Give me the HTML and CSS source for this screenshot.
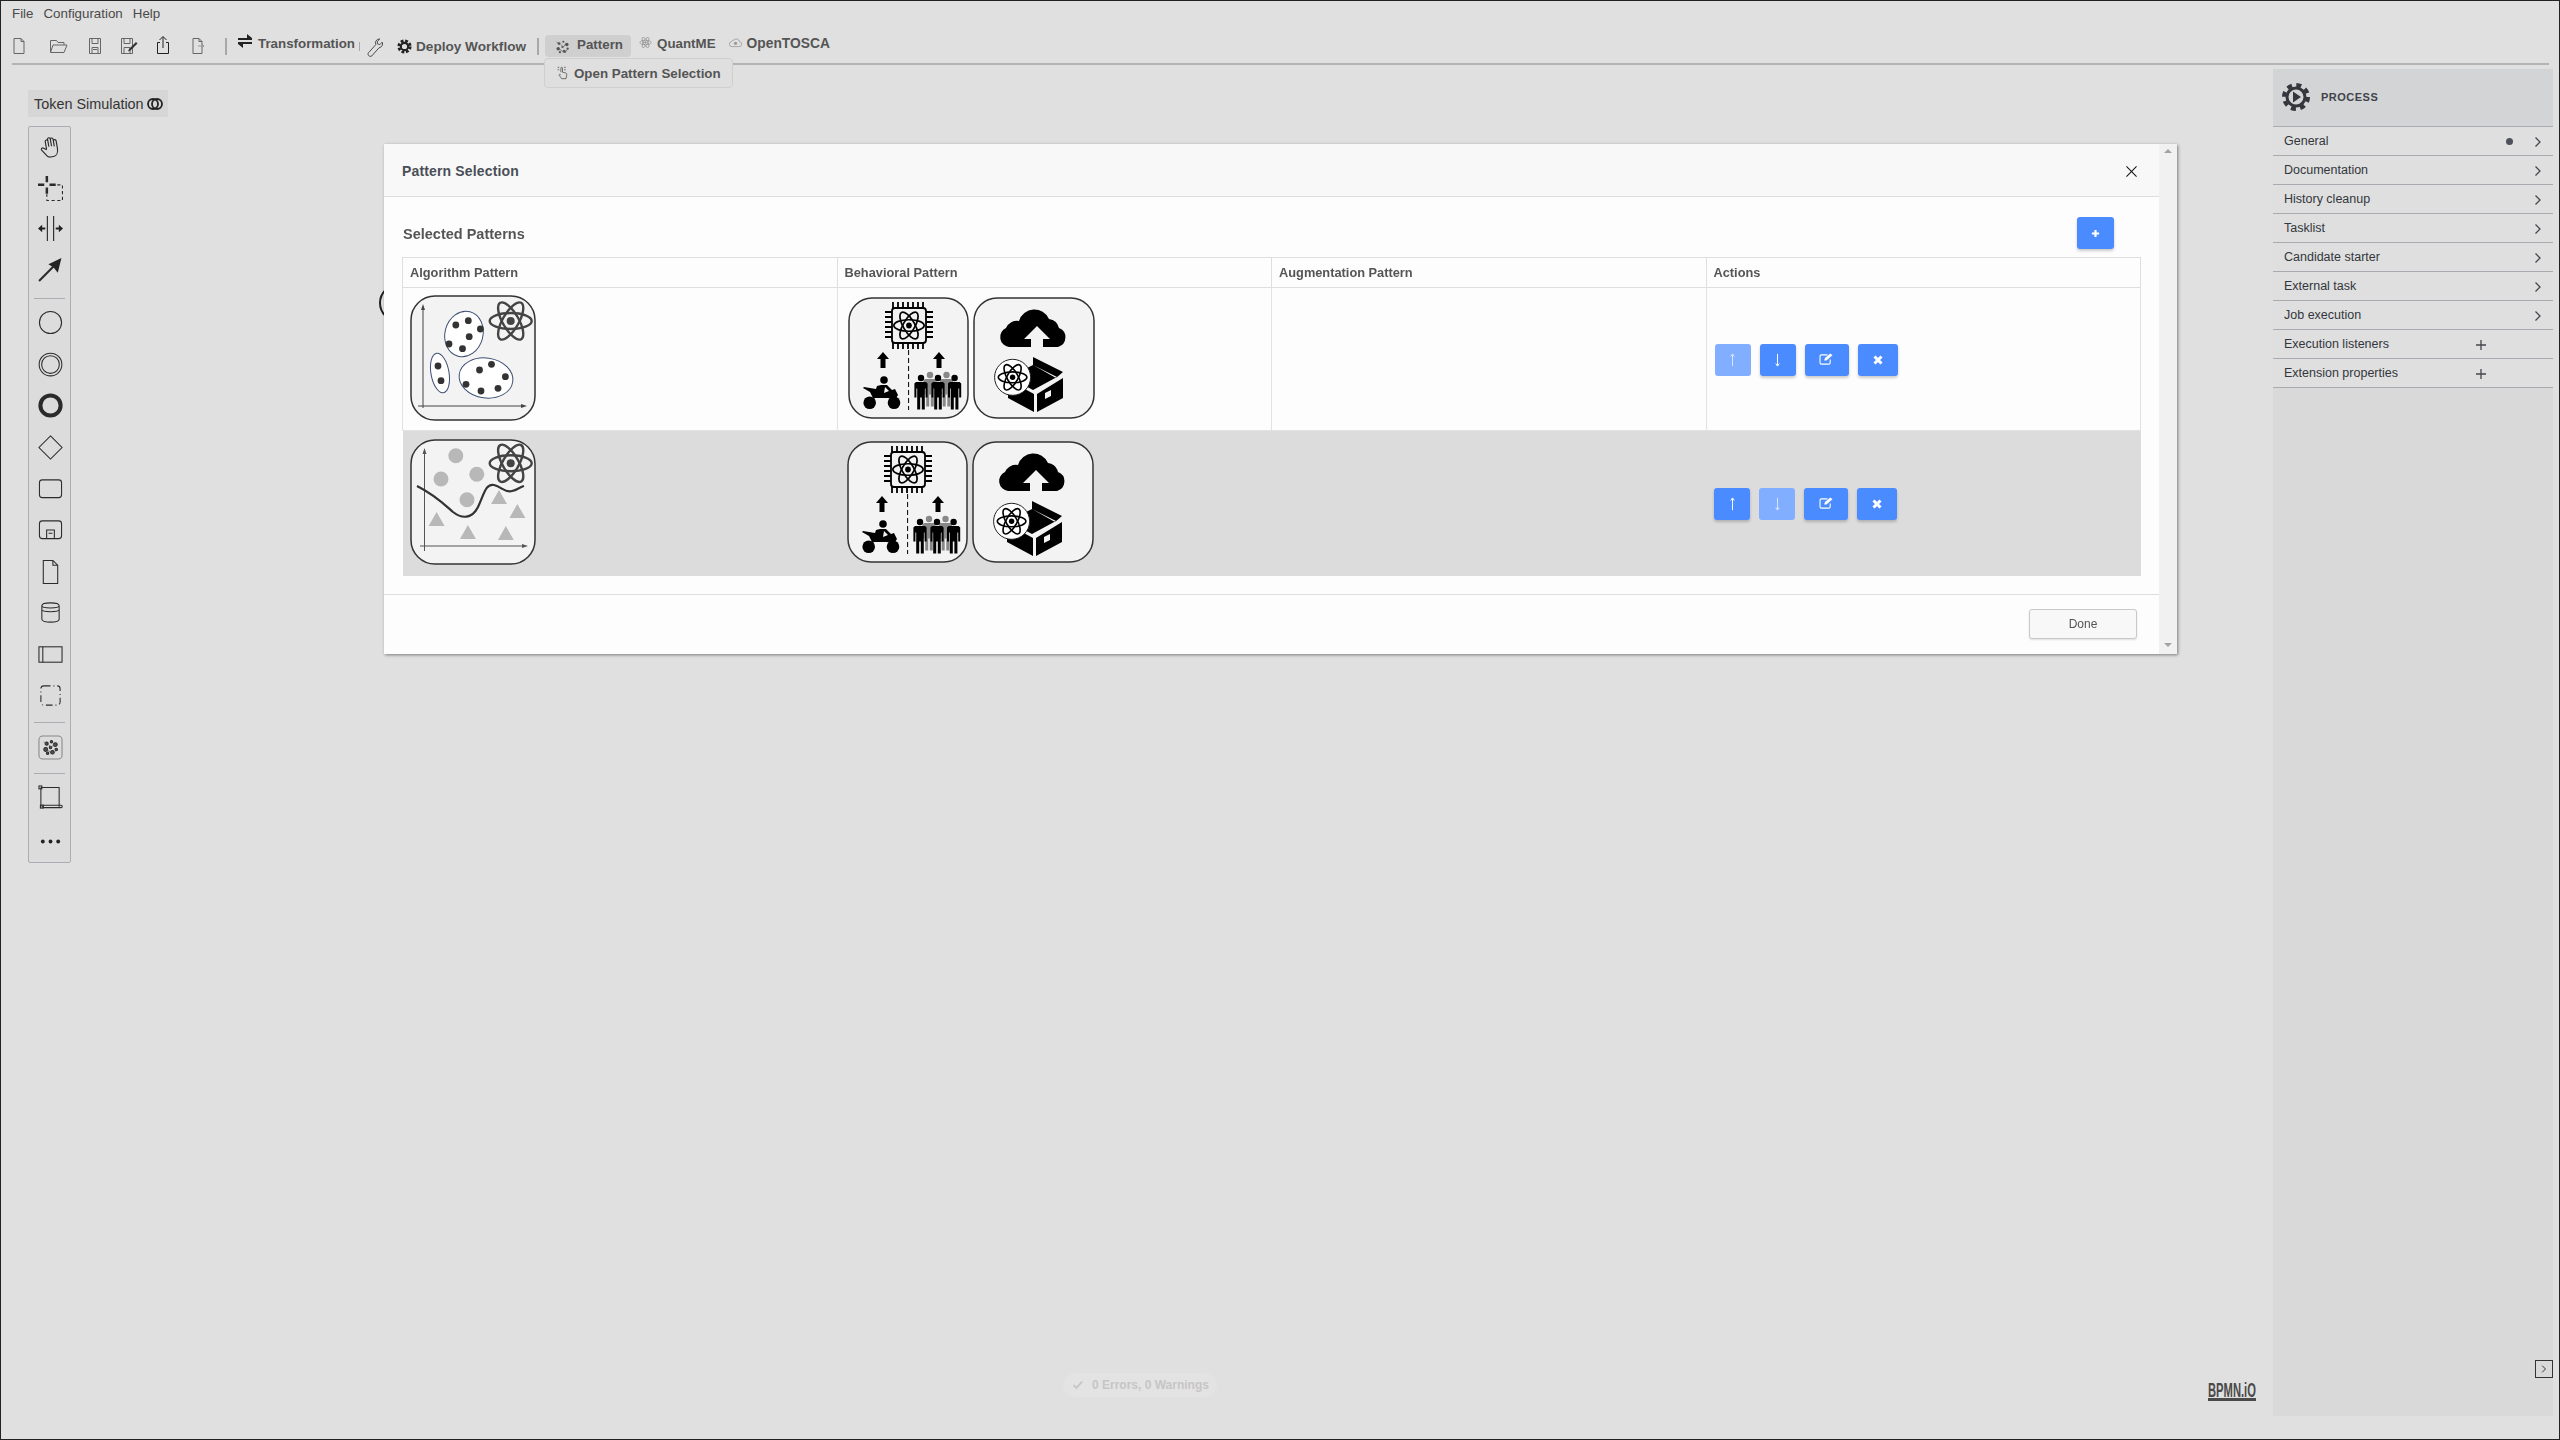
FILE: index.html
```html
<!DOCTYPE html>
<html lang="en">
<head>
    <meta charset="UTF-8">
    <title>Pattern Selection</title>
    <link rel="stylesheet" href="styles.css">
</head>
<body>
<svg class="sprites" aria-hidden="true">
    <defs>
        <g id="atom" fill="none" stroke-width="2.4">
            <ellipse cx="0" cy="0" rx="21" ry="8"/>
            <ellipse cx="0" cy="0" rx="21" ry="8" transform="rotate(60)"/>
            <ellipse cx="0" cy="0" rx="21" ry="8" transform="rotate(-60)"/>
            <circle cx="0" cy="0" r="4" fill="currentColor" stroke="none"/>
        </g>
        <g id="person">
            <circle cx="0" cy="-13" r="3.2"/>
            <path d="M-5 -9h10l1.6 1.5v14h-2v-9h-.8v21h-3v-12h-1.600v12h-3v-21h-.8v9h-2v-14z"/>
        </g>
        <symbol id="pattern-clustering" viewBox="0 0 126 126">
            <rect x="1" y="1" width="124" height="124" rx="24" fill="#f3f3f3" stroke="#333" stroke-width="1.5"/>
            <path d="M13 113V13M8 111H113" fill="none" stroke="#444"/>
            <path d="M13 9l-2 6h4zM117 111l-6-2v4z" fill="#444"/>
            <g fill="#fff" stroke="#3d4f73">
                <ellipse cx="54" cy="39" rx="19" ry="23" transform="rotate(15 54 39)"/>
                <ellipse cx="30" cy="78" rx="9" ry="20" transform="rotate(-10 30 78)"/>
                <ellipse cx="76" cy="83" rx="27" ry="20" transform="rotate(8 76 83)"/>
            </g>
            <g fill="#333">
                <circle cx="45.800" cy="30" r="3.400"/><circle cx="58.300" cy="25.700" r="3.400"/><circle cx="70.400" cy="34" r="3.400"/>
                <circle cx="59.200" cy="41.700" r="3.400"/><circle cx="39" cy="49" r="3.400"/><circle cx="52.500" cy="53.700" r="3.400"/>
                <circle cx="28" cy="71" r="3.400"/><circle cx="31" cy="85.700" r="3.400"/><circle cx="69.500" cy="75" r="3.400"/>
                <circle cx="81.500" cy="69.300" r="3.400"/><circle cx="95.400" cy="81.700" r="3.400"/><circle cx="88" cy="93.300" r="3.400"/>
                <circle cx="71" cy="96" r="3.400"/><circle cx="56" cy="89.300" r="3.400"/>
            </g>
            <use href="#atom" transform="translate(100.700 26)" stroke="#444" color="#444"/>
        </symbol>
        <symbol id="pattern-classification" viewBox="0 0 126 126">
            <rect x="1" y="1" width="124" height="124" rx="24" fill="#f3f3f3" stroke="#333" stroke-width="1.5"/>
            <path d="M14.500 112V12M10 107H114" fill="none" stroke="#555"/>
            <path d="M14.500 9l-2 6h4zM118 107l-6-2v4z" fill="#555"/>
            <g fill="#b8b8b8">
                <ellipse cx="45.800" cy="16.700" rx="7.500" ry="7.500"/><ellipse cx="31" cy="40" rx="7.500" ry="7.500"/>
                <ellipse cx="66.800" cy="35.300" rx="7.500" ry="7.500"/><ellipse cx="57" cy="60.700" rx="7.500" ry="7.500"/>
                <path d="M89 51l8 14H81zM107.400 65l8 14h-16zM26.600 73l8 14h-16zM57.900 86l8 14H50zM95.800 87l8 14H88z"/>
            </g>
            <path d="M7 47C25 56 35 66 43 73C52 80 62 80 68 68C74 55 76 44 84 46C92 48 95 54 102 52C107 51 110 48 114 47" fill="none" stroke="#333" stroke-width="2.200"/>
            <use href="#atom" transform="translate(100.700 24.300)" stroke="#444" color="#444"/>
        </symbol>
        <symbol id="pattern-hybrid" viewBox="0 0 121 122">
            <rect x="1" y="1" width="119" height="120" rx="23" fill="#f3f3f3" stroke="#333" stroke-width="1.5"/>
            <path d="M45 5v6M50 5v6M55 5v6M60 5v6M65 5v6M70 5v6M75 5v6M45 46v6M50 46v6M55 46v6M60 46v6M65 46v6M70 46v6M75 46v6M37 15h7M37 20h7M37 25h7M37 30h7M37 35h7M37 40h7M78 15h7M78 20h7M78 25h7M78 30h7M78 35h7M78 40h7" stroke="#000" stroke-width="1.800"/>
            <rect x="44" y="11" width="34" height="35" rx="3" fill="#f3f3f3" stroke="#000" stroke-width="1.800"/>
            <use href="#atom" transform="translate(61 28.500) scale(.72)" stroke="#000" color="#000"/>
            <path d="M35 55l6 7h-3.500v9h-5v-9H29zM91 55l6 7h-3.500v9h-5v-9H85z"/>
            <path d="M60.600 53v60" stroke="#000" stroke-dasharray="5 3"/>
            <g>
                <circle cx="21.700" cy="105.700" r="6.300"/><circle cx="46" cy="105.700" r="6.300"/>
                <circle cx="36" cy="83" r="3.800"/>
                <path d="M33 88h6l5 5 3-1 3 6-2 3H25l-3-6-7-4 1-1 12 2 1-3z"/>
                <path d="M37 90l4 4-5 2z" fill="#f3f3f3"/>
            </g>
            <g fill="#888">
                <use href="#person" transform="translate(82 91)"/>
                <use href="#person" transform="translate(98.500 91)"/>
            </g>
            <use href="#person" transform="translate(73 94)"/>
            <use href="#person" transform="translate(90 94)"/>
            <use href="#person" transform="translate(106.600 94)"/>
        </symbol>
        <symbol id="pattern-deploy" viewBox="0 0 122 122">
            <rect x="1" y="1" width="120" height="120" rx="23" fill="#f3f3f3" stroke="#333" stroke-width="1.5"/>
            <path d="M36 50a10 10 0 0 1-3-19 12 12 0 0 1 13-7 16 16 0 0 1 30-2 12 12 0 0 1 10 9 10 10 0 0 1-1 19z"/>
            <path d="M64 29l13 13h-7v9h-12v-9h-7z" fill="#f3f3f3"/>
            <path d="M60 60l30 15-7 6-23-13zM60 68l-24 12 24 13 24-13z"/>
            <path d="M35 83l26 14v18L35 101zM90 81v20L64 115V97z"/>
            <path d="M72 96l6-3v6l-6 3z" fill="#f3f3f3"/>
            <circle cx="39.600" cy="80.300" r="18" fill="#fff" stroke="#222"/>
            <use href="#atom" transform="translate(39.600 80.300) scale(.68)" stroke="#000" color="#000"/>
        </symbol>
        <g id="mini-pattern" fill="#555">
            <circle cx="7" cy="7" r="1.600"/><circle cx="12" cy="5" r="1.200"/><circle cx="16" cy="8" r="2"/>
            <circle cx="6" cy="13" r="2"/><circle cx="11" cy="11" r="1.300"/><circle cx="13" cy="16" r="1.800"/>
            <circle cx="8" cy="17" r="1.300"/><circle cx="17" cy="13" r="1.300"/>
            <path d="M9 8l3 3 3-4M7 13l4 3M4 5l3 2M14 18l3-5" stroke="#555" stroke-width=".7" fill="none"/>
        </g>
    </defs>
</svg>

<div class="app">
    <nav class="menubar">
        <span>File</span>
        <span>Configuration</span>
        <span>Help</span>
    </nav>

    <div class="toolbar">
        <div class="file-tools">
            <svg class="ic" viewBox="0 0 16 18"><path d="M3 1.500h7l3 3v12H3zM10 1.500v3h3"/></svg>
            <svg class="ic ic-wide" viewBox="0 0 20 18"><path d="M1.500 15V3.500h6l1.500 2h6V8M1.500 15.500L4 8h14l-3 7.500z"/></svg>
            <svg class="ic" viewBox="0 0 16 18"><path d="M2.500 1.500h11v15h-11zM5 1.500v5h6v-5M5 16.500v-6h6v6M6 12.500h4"/></svg>
            <svg class="ic ic-wide" viewBox="0 0 20 18"><path d="M2.500 1.500h11v15h-11zM5 1.500v5h6v-5M5 16.500v-6h6v6"/><path class="ic-solid" d="M10 12l7-7 1.500 1.500-7 7-2.500 1z"/></svg>
            <svg class="ic ic-dark" viewBox="0 0 16 20"><path d="M8 13V2M4.500 5L8 1.500 11.500 5M5 7.500H2.500v11h11v-11H11"/></svg>
            <svg class="ic" viewBox="0 0 16 18"><path d="M3 1.500h6l3 3v12H3zM9 1.500v3h3"/><path d="M8 9h6M12 7l2 2-2 2" stroke="#999"/></svg>
        </div>
        <span class="tb-sep"></span>
        <button class="tb-btn transform-btn">
            <svg class="swap-ic" viewBox="0 0 14 14"><path d="M9 0l5 4-5 0zM0 4h14v2H0zM5 14l-5-4 5 0zM0 8h14v2H0z"/></svg>
            Transformation
        </button>
        <span class="tb-sep tb-sep-small"></span>
        <svg class="wrench-ic" viewBox="0 0 20 24"><path d="M15 2a5 5 0 0 0-4 7L3 18a3 3 0 1 0 4 4l8-9a5 5 0 0 0 4-7l-3 3-3-1v-3l3-3z"/></svg>
        <button class="tb-btn deploy-btn">
            <svg class="gear-ic" viewBox="0 0 18 18"><circle cx="9" cy="9" r="6.800" fill="none" stroke="#222" stroke-width="3.400" stroke-dasharray="3.300 2.040"/><circle cx="9" cy="9" r="4.400" fill="none" stroke="#222" stroke-width="2.600"/></svg>
            Deploy Workflow
        </button>
        <span class="tb-sep tb-sep-deploy"></span>
        <button class="tb-btn pattern-btn">
            <svg class="pattern-ic" viewBox="0 0 22 22"><use href="#mini-pattern"/></svg>
            Pattern
        </button>
        <button class="tb-btn quantme-btn">
            <svg class="atom-ic" viewBox="-24 -24 48 48"><use href="#atom" stroke="#888" color="#888"/></svg>
            QuantME
        </button>
        <button class="tb-btn tosca-btn">
            <svg class="atom-ic" viewBox="0 0 16 14"><path d="M4 12a3 3 0 0 1-1-6 3 3 0 0 1 3-2 4 4 0 0 1 7 2 3 3 0 0 1-1 6z" fill="none" stroke="#999"/><circle cx="8" cy="8" r="2" fill="#999"/></svg>
            OpenTOSCA
        </button>
    </div>

    <div class="pattern-menu">
        <svg class="pointer-ic" viewBox="0 0 16 18"><path d="M6 8V3a1 1 0 0 1 2 0v5l4 1c1 .3 1.500 1 1.300 2l-1 5H7l-3-4c-.6-1 .5-2 1.400-1L6 11.500M2 2h2M2 5h2M10 2h2M10 5h2"/></svg>
        Open Pattern Selection
    </div>

    <div class="workspace">
        <main class="canvas">
            <svg class="start-event" viewBox="0 0 40 40"><circle cx="20" cy="20" r="18" fill="none" stroke="#222" stroke-width="2"/></svg>

            <div class="token-toggle">
                Token Simulation
                <svg viewBox="0 0 16 12"><circle cx="6" cy="6" r="5"/><circle cx="10" cy="6" r="5"/></svg>
            </div>

            <div class="palette">
                <div class="tool-group tool-group-first">
                    <div class="tool"><svg viewBox="0 0 24 24"><path transform="rotate(-10 12 12)" d="M8 13V5.500a1.300 1.300 0 0 1 2.600 0V11M10.600 11V3.800a1.300 1.300 0 0 1 2.600 0V11M13.200 11V4.500a1.300 1.300 0 0 1 2.600 0v7M15.800 11.500v-5a1.300 1.300 0 0 1 2.600 0V14c0 4-2 7-5 7h-3c-2 0-3-1-4-3l-3.200-5c-.8-1.400 1-2.600 2.200-1.500L8 13.500"/></svg></div>
                    <div class="tool"><svg viewBox="0 0 24 24"><path class="thick" d="M8.500 0v6M8.500 11v6M0 8.500h6M11 8.500h6"/><path stroke-dasharray="3 2.500" d="M13 8.500h10.500v15H8.500v-6"/></svg></div>
                    <div class="tool"><svg viewBox="0 0 24 24"><path d="M9 0v24M15 0v24"/><path class="solid" d="M0 12l4-3.500v2.500h3v2H4v2.500zM24 12l-4-3.500v2.500h-3v2h3v2.500z"/></svg></div>
                    <div class="tool"><svg viewBox="0 0 24 24"><path class="thick-2" d="M1 23L16 8"/><path class="solid" d="M22.500 1L19 15l-4-5-5-3z"/></svg></div>
                </div>
                <div class="tool-sep tool-sep-a"></div>
                <div class="tool-group">
                    <div class="tool"><svg viewBox="0 0 26 26"><circle cx="13" cy="13" r="11.500"/></svg></div>
                    <div class="tool"><svg viewBox="0 0 26 26"><circle cx="13" cy="13" r="11.800"/><circle cx="13" cy="13" r="9.200"/></svg></div>
                    <div class="tool"><svg viewBox="0 0 26 26"><circle class="thick-end" cx="13" cy="13" r="10.500"/></svg></div>
                    <div class="tool"><svg viewBox="0 0 26 26"><path d="M13 1l12 12-12 12L1 13z"/></svg></div>
                    <div class="tool"><svg viewBox="0 0 26 26"><rect x="1.500" y="4" width="23" height="18.500" rx="3"/></svg></div>
                    <div class="tool"><svg viewBox="0 0 26 26"><rect x="1.500" y="4" width="23" height="18.500" rx="3"/><path d="M9 22.500V13.500h8v9M11 17h4"/></svg></div>
                    <div class="tool"><svg viewBox="0 0 26 26"><path d="M5.500 1.500h10l5 5v19h-15zM15.500 1.500v5h5"/></svg></div>
                    <div class="tool"><svg viewBox="0 0 26 26"><path d="M4 6c0-4 18-4 18 0v14c0 4-18 4-18 0zM4 6c0 3 18 3 18 0M4 10c0 3 18 3 18 0"/></svg></div>
                    <div class="tool"><svg viewBox="0 0 26 26"><rect x="1" y="5" width="24" height="16"/><path d="M5 5v16"/></svg></div>
                    <div class="tool"><svg viewBox="0 0 26 26"><rect x="3" y="3" width="20" height="20" rx="3" stroke-dasharray="7 3 1 3"/></svg></div>
                </div>
                <div class="tool-sep tool-sep-b"></div>
                <div class="tool">
                    <svg viewBox="0 0 26 26"><rect x="1" y="1" width="24" height="24" rx="4" stroke="#888"/><use href="#mini-pattern" transform="translate(2 2)"/></svg>
                </div>
                <div class="tool-sep tool-sep-c"></div>
                <div class="tool"><svg viewBox="0 0 26 26"><path d="M3 2.500h19v20M3 2.500v21M5 23.500h19a1 1 0 0 0 0-2.500H5z"/><rect x="1" y="1" width="3" height="3"/><rect x="2.500" y="21" width="3" height="3"/></svg></div>
                <div class="tool tool-more"><svg viewBox="0 0 26 26"><circle class="solid" cx="5" cy="13" r="2"/><circle class="solid" cx="13" cy="13" r="2"/><circle class="solid" cx="21" cy="13" r="2"/></svg></div>
            </div>

            <div class="status-pill">
                <svg viewBox="0 0 14 12"><path d="M1.500 6l3.500 3.500 7-7.500"/></svg>
                0 Errors, 0 Warnings
            </div>
            <div class="bpmn-logo"><span>BPMN.iO</span></div>
        </main>

        <aside class="properties">
            <header class="prop-header">
                <svg viewBox="0 0 30 30">
                    <circle class="gear-teeth" cx="15" cy="15" r="12"/>
                    <circle class="gear-ring" cx="15" cy="15" r="9"/>
                    <path d="M12 9.500l8 5.500-8 5.500z"/>
                </svg>
                <span>PROCESS</span>
            </header>
            <div class="prop-row">General<span class="prop-dot"></span><svg class="chevron" viewBox="0 0 8 12"><path d="M1.500 1.500L6 6l-4.500 4.500"/></svg></div>
            <div class="prop-row">Documentation<svg class="chevron" viewBox="0 0 8 12"><path d="M1.500 1.500L6 6l-4.500 4.500"/></svg></div>
            <div class="prop-row">History cleanup<svg class="chevron" viewBox="0 0 8 12"><path d="M1.500 1.500L6 6l-4.500 4.500"/></svg></div>
            <div class="prop-row">Tasklist<svg class="chevron" viewBox="0 0 8 12"><path d="M1.500 1.500L6 6l-4.500 4.500"/></svg></div>
            <div class="prop-row">Candidate starter<svg class="chevron" viewBox="0 0 8 12"><path d="M1.500 1.500L6 6l-4.500 4.500"/></svg></div>
            <div class="prop-row">External task<svg class="chevron" viewBox="0 0 8 12"><path d="M1.500 1.500L6 6l-4.500 4.500"/></svg></div>
            <div class="prop-row">Job execution<svg class="chevron" viewBox="0 0 8 12"><path d="M1.500 1.500L6 6l-4.500 4.500"/></svg></div>
            <div class="prop-row">Execution listeners<svg class="plus" viewBox="0 0 12 12"><path d="M6 1v10M1 6h10"/></svg></div>
            <div class="prop-row">Extension properties<svg class="plus" viewBox="0 0 12 12"><path d="M6 1v10M1 6h10"/></svg></div>
            <button class="panel-toggle"><svg viewBox="0 0 8 12"><path d="M1.500 1.500L6 6l-4.500 4.500"/></svg></button>
        </aside>
    </div>
</div>

<div class="modal">
    <div class="modal-main">
        <div class="modal-header">
            <h2>Pattern Selection</h2>
            <svg class="modal-close" viewBox="0 0 12 12"><path d="M.5 .5l11 11M11.500 .5l-11 11"/></svg>
        </div>
        <div class="modal-body">
            <div class="selected-head">
                <h3>Selected Patterns</h3>
                <button class="btn-blue btn-add"><svg viewBox="0 0 10 10"><path d="M5 1v8M1 5h8"/></svg></button>
            </div>
            <table class="pattern-table">
                <thead>
                    <tr>
                        <th>Algorithm Pattern</th>
                        <th>Behavioral Pattern</th>
                        <th>Augmentation Pattern</th>
                        <th>Actions</th>
                    </tr>
                </thead>
                <tbody>
                    <tr class="row-first">
                        <td class="pic-cell"><svg class="pic-algo"><use href="#pattern-clustering"/></svg></td>
                        <td class="pic-cell">
                            <div class="pic-list">
                                <svg class="pic-hybrid"><use href="#pattern-hybrid"/></svg>
                                <svg class="pic-deploy"><use href="#pattern-deploy"/></svg>
                            </div>
                        </td>
                        <td></td>
                        <td>
                            <div class="actions">
                                <button class="btn-blue btn-arrow is-off"><svg viewBox="0 0 10 16"><path d="M5 15V2M3 4l2-3 2 3"/></svg></button>
                                <button class="btn-blue btn-arrow"><svg viewBox="0 0 10 16"><path d="M5 1v13M3 12l2 3 2-3"/></svg></button>
                                <button class="btn-blue btn-edit"><svg viewBox="0 0 16 13"><path d="M12 7v3.500a1.500 1.500 0 0 1-1.500 1.500h-8A1.500 1.500 0 0 1 1 10.500v-7A1.500 1.500 0 0 1 2.500 2H9"/><path class="fill" d="M5.500 8l.8-2.500L12 .5l2.500 2L8 8z"/></svg></button>
                                <button class="btn-blue btn-del"><svg viewBox="0 0 10 10"><path d="M1.500 1.500l7 7M8.500 1.500l-7 7"/></svg></button>
                            </div>
                        </td>
                    </tr>
                    <tr class="row-second">
                        <td class="pic-cell"><svg class="pic-algo"><use href="#pattern-classification"/></svg></td>
                        <td class="pic-cell">
                            <div class="pic-list">
                                <svg class="pic-hybrid"><use href="#pattern-hybrid"/></svg>
                                <svg class="pic-deploy"><use href="#pattern-deploy"/></svg>
                            </div>
                        </td>
                        <td></td>
                        <td>
                            <div class="actions">
                                <button class="btn-blue btn-arrow"><svg viewBox="0 0 10 16"><path d="M5 15V2M3 4l2-3 2 3"/></svg></button>
                                <button class="btn-blue btn-arrow is-off"><svg viewBox="0 0 10 16"><path d="M5 1v13M3 12l2 3 2-3"/></svg></button>
                                <button class="btn-blue btn-edit"><svg viewBox="0 0 16 13"><path d="M12 7v3.500a1.500 1.500 0 0 1-1.500 1.500h-8A1.500 1.500 0 0 1 1 10.500v-7A1.500 1.500 0 0 1 2.500 2H9"/><path class="fill" d="M5.500 8l.8-2.500L12 .5l2.500 2L8 8z"/></svg></button>
                                <button class="btn-blue btn-del"><svg viewBox="0 0 10 10"><path d="M1.500 1.500l7 7M8.500 1.500l-7 7"/></svg></button>
                            </div>
                        </td>
                    </tr>
                </tbody>
            </table>
        </div>
        <div class="modal-footer">
            <button class="btn-done">Done</button>
        </div>
    </div>
    <div class="modal-scroll">
        <span class="scroll-up"></span>
        <span class="scroll-down"></span>
    </div>
</div>
</body>
</html>
```

FILE: styles.css
```css
* { box-sizing: border-box; }
html, body { margin: 0; padding: 0; }
body { font-family: "Liberation Sans", Arial, sans-serif; background: #e0e0e0; color: #444; }
button { font-family: inherit; border: 0; padding: 0; background: none; }
.sprites { position: absolute; width: 0; height: 0; }

.app {
    width: 2560px;
    height: 1440px;
    border: 1px solid #222;
    background: #e0e0e0;
    display: flex;
    flex-direction: column;
    position: relative;
}

/* menu + toolbar */
.menubar {
    height: 23px;
    padding: 5px 0 0 11px;
    display: flex;
    gap: 10px;
    font-size: 13.33px;
    line-height: 15px;
    color: #4a4a4a;
}
.toolbar {
    height: 41px;
    margin: 0 10px 0 11px;
    border-bottom: 2px solid #b4b4b4;
    display: flex;
    align-items: flex-start;
    flex: none;
}
.file-tools {
    display: grid;
    grid-template-columns: 36px 44px 28px 40px 28px 42px;
    margin: 13px 0 0 -11px;
    width: 218px;
    justify-items: center;
    flex: none;
}
.ic { width: 16px; height: 18px; fill: none; stroke: #666; stroke-width: 1; }
.ic-wide { width: 20px; }
.ic-dark { stroke: #222; height: 20px; margin-top: -2px; }
.ic-solid { fill: #333; stroke: none; }
.tb-sep { width: 2px; height: 17px; background: #a8a8a8; margin: 14px 0 0 6px; flex: none; }
.tb-sep-small { height: 9px; margin: 18px 0 0 4px; width: 1px; }
.tb-sep-deploy { height: 17px; margin-left: 11px; margin-top: 14px; }
.tb-btn {
    display: flex;
    align-items: center;
    font-size: 13.33px;
    font-weight: 700;
    color: #555;
    white-space: nowrap;
    flex: none;
}
.transform-btn { margin: 10px 0 0 11px; height: 18px; gap: 6px; }
.swap-ic { width: 14px; height: 14px; margin-top: -4px; fill: #222; }
.wrench-ic { width: 16px; height: 20px; margin: 13px 0 0 7px; fill: none; stroke: #444; stroke-width: 1.200; }
.deploy-btn { margin: 13px 0 0 14px; gap: 4px; height: 18px; font-size: 13.600px; }
.gear-ic { width: 15px; height: 15px; }
.pattern-btn {
    width: 86px;
    height: 22px;
    margin: 11px 0 0 6px;
    padding: 0 0 4px 8px;
    background: #cfcfcf;
    border-radius: 4px;
    gap: 5px;
    align-items: center;
}
.pattern-ic { width: 19px; height: 20px; margin-top: 5px; }
.quantme-btn { margin: 9px 0 0 8px; gap: 5px; height: 20px; }
.tosca-btn { margin: 9px 0 0 13px; gap: 5px; height: 20px; font-size: 13.800px; }
.atom-ic { width: 13px; height: 13px; margin-top: -2px; }

.pattern-menu {
    position: absolute;
    left: 543px;
    top: 57px;
    width: 189px;
    height: 30px;
    background: #dfdfdf;
    border: 1px solid #cfcfcf;
    border-radius: 4px;
    display: flex;
    align-items: center;
    gap: 5px;
    padding-left: 11px;
    font-size: 13.33px;
    font-weight: 700;
    color: #555;
    z-index: 2;
}
.pointer-ic { width: 13px; height: 16px; fill: none; stroke: #444; stroke-width: .9; }

/* diagram area */
.workspace { flex: 1; display: flex; min-height: 0; padding: 4px 6px 23px 0; }
.canvas { flex: 1; position: relative; padding: 21px 0 0 27px; }
.start-event { position: absolute; left: 377px; top: 214px; width: 40px; height: 40px; }
.token-toggle {
    width: 140px;
    height: 27px;
    background: #d6d6d6;
    display: flex;
    align-items: center;
    gap: 3px;
    padding-left: 6px;
    font-size: 14.400px;
    color: #333;
}
.token-toggle svg { width: 16px; height: 12px; fill: none; stroke: #222; stroke-width: 1.800; }
.palette {
    width: 43px;
    margin-top: 9px;
    border: 1px solid #acacb2;
    border-radius: 2px;
    background: #dcdcdc;
}
.tool { height: 41.400px; padding-left: 1px; display: flex; align-items: center; justify-content: center; }
.tool svg { width: 25px; height: 25px; fill: none; stroke: #2b2b2b; stroke-width: 1.100; }
.tool-group-first .tool { height: 40.800px; }
.tool .thick { stroke-width: 2.400; }
.tool .thick-2 { stroke-width: 2; }
.tool .thick-end { stroke-width: 4.200; }
.tool .solid { fill: #222; stroke: none; }
.tool-more { margin-top: 3px; }
.tool-sep { height: 1px; background: #acacb2; margin: 0 5px; }
.tool-sep-a { margin-top: 8px; margin-bottom: 3px; }
.tool-sep-b { margin-top: 6px; margin-bottom: 4px; }
.tool-sep-c { margin-top: 5px; margin-bottom: 2px; }

.status-pill {
    position: absolute;
    left: 1062px;
    bottom: 19px;
    width: 154px;
    height: 24px;
    border-radius: 12px;
    background: #e3e3e3;
    color: #c6c6c6;
    font-size: 12px;
    font-weight: 700;
    display: flex;
    align-items: center;
    gap: 8px;
    padding-left: 9px;
}
.status-pill svg { width: 12px; height: 10px; fill: none; stroke: #c6c6c6; stroke-width: 2.200; }
.bpmn-logo {
    position: absolute;
    left: 2207px;
    bottom: 15px;
    width: 48px;
    height: 19px;
    border-bottom: 3px solid #4a4a4a;
    font-size: 20px;
    font-weight: 700;
    line-height: 16px;
    color: #4a4a4a;
    white-space: nowrap;
}
.bpmn-logo span { display: inline-block; transform: scaleX(.56); transform-origin: left center; }

/* properties panel */
.properties { width: 280px; background: #d9d9d9; position: relative; }
.prop-header {
    height: 58px;
    padding: 0 0 2px 8px;
    background: #d3d4d6;
    border-bottom: 1px solid #a9abb0;
    display: flex;
    align-items: center;
    gap: 10px;
    font-size: 11px;
    font-weight: 700;
    letter-spacing: .5px;
    color: #40434a;
}
.prop-header svg { width: 30px; height: 30px; flex: none; }
.gear-teeth { fill: none; stroke: #33363c; stroke-width: 4; stroke-dasharray: 5 4.420; }
.gear-ring { fill: #d3d4d6; stroke: #33363c; stroke-width: 3; }
.prop-header path { fill: #33363c; }
.prop-row {
    height: 29px;
    background: #dfdfdf;
    border-bottom: 1px solid #a9abb0;
    padding-left: 11px;
    display: flex;
    align-items: center;
    position: relative;
    font-size: 12.500px;
    color: #33363c;
}
.chevron { position: absolute; left: 261px; top: 9px; width: 8px; height: 12px; fill: none; stroke: #44474e; stroke-width: 1.300; }
.plus { position: absolute; left: 202px; top: 9px; width: 12px; height: 12px; fill: none; stroke: #44474e; stroke-width: 1.300; }
.prop-dot { position: absolute; left: 233px; top: 11px; width: 7px; height: 7px; border-radius: 50%; background: #4e5159; }
.panel-toggle {
    position: absolute;
    right: 0;
    bottom: 38px;
    width: 18px;
    height: 18px;
    border: 1.500px solid #333;
    display: flex;
    align-items: center;
    justify-content: center;
}
.panel-toggle svg { width: 6px; height: 10px; fill: none; stroke: #333; stroke-width: 1.300; }

/* modal */
.modal {
    position: fixed;
    left: 384px;
    top: 144px;
    width: 1793px;
    height: 510px;
    display: flex;
    background: #fdfdfd;
    box-shadow: 1px 1px 3px rgba(0, 0, 0, .45);
    z-index: 5;
}
.modal-main { flex: 1; min-width: 0; display: flex; flex-direction: column; }
.modal-scroll { width: 18px; background: #f1f1f1; position: relative; }
.scroll-up, .scroll-down {
    position: absolute;
    left: 5px;
    border-left: 4px solid transparent;
    border-right: 4px solid transparent;
}
.scroll-up { top: 5px; border-bottom: 4px solid #a3a3a3; }
.scroll-down { bottom: 7px; border-top: 4px solid #a3a3a3; }
.modal-header {
    height: 53px;
    flex: none;
    background: #f8f8f8;
    border-bottom: 1px solid #dedede;
    display: flex;
    align-items: center;
    justify-content: space-between;
    padding: 2px 22px 0 18px;
}
.modal-header h2 { margin: 0; font-size: 14px; letter-spacing: .15px; color: #4a4f57; }
.modal-close { width: 11px; height: 11px; fill: none; stroke: #111; stroke-width: 1.100; }
.modal-body { flex: 1; padding: 20px 18px 0; }
.selected-head {
    height: 32px;
    margin-bottom: 8px;
    display: flex;
    align-items: center;
    justify-content: space-between;
    padding-right: 27px;
}
.selected-head h3 { margin: 2px 0 0 1px; font-size: 14.500px; color: #555; }
.pattern-table { width: 100%; border-collapse: collapse; table-layout: fixed; }
.pattern-table th {
    height: 30px;
    border: 1px solid #dedede;
    padding: 0 7px;
    text-align: left;
    font-size: 12.800px;
    color: #555;
}
.pattern-table td { border: 1px solid #e2e2e2; padding: 0 7px; vertical-align: middle; }
.row-first { height: 143px; background: #fdfdfd; }
.row-second { height: 145px; background: #dcdcdc; }
.row-second td { border: 0; }
.pattern-table td.pic-cell { padding-bottom: 2px; }
.pic-algo { display: block; width: 126px; height: 126px; }
.pic-list { display: flex; gap: 4px; margin-left: 3px; }
.pic-hybrid { width: 121px; height: 122px; }
.pic-deploy { width: 122px; height: 122px; }
.actions { display: flex; gap: 9px; margin: 1px 0 0 1px; }
.btn-blue {
    height: 32px;
    background: #4a8cff;
    border-radius: 3px;
    box-shadow: 0 2px 3px rgba(0, 0, 0, .2);
    display: flex;
    align-items: center;
    justify-content: center;
}
.btn-add { width: 37px; }
.btn-add svg { width: 9px; height: 9px; fill: none; stroke: #fff; stroke-width: 2.400; }
.btn-arrow { width: 36px; }
.btn-arrow svg { width: 9px; height: 14px; fill: none; stroke: #fff; stroke-width: 1.100; }
.btn-arrow.is-off { background: #82aeff; box-shadow: none; }
.btn-arrow.is-off svg { opacity: .7; }
.btn-edit { width: 44px; }
.btn-edit svg { width: 15px; height: 12px; margin-top: -2px; fill: none; stroke: #fff; stroke-width: 1.200; }
.btn-edit .fill { fill: #fff; stroke: none; }
.btn-del { width: 40px; }
.btn-del svg { width: 10px; height: 10px; fill: none; stroke: #fff; stroke-width: 3; }
.modal-footer {
    height: 60px;
    flex: none;
    margin-top: 18px;
    border-top: 1px solid #dedede;
    display: flex;
    justify-content: flex-end;
    align-items: flex-start;
    padding: 14px 22px 0 0;
}
.btn-done {
    width: 108px;
    height: 30px;
    background: #f8f8f8;
    border: 1px solid #c9c9c9;
    border-radius: 3px;
    box-shadow: 0 1px 2px rgba(0, 0, 0, .12);
    font-size: 12px;
    color: #555;
}
```
